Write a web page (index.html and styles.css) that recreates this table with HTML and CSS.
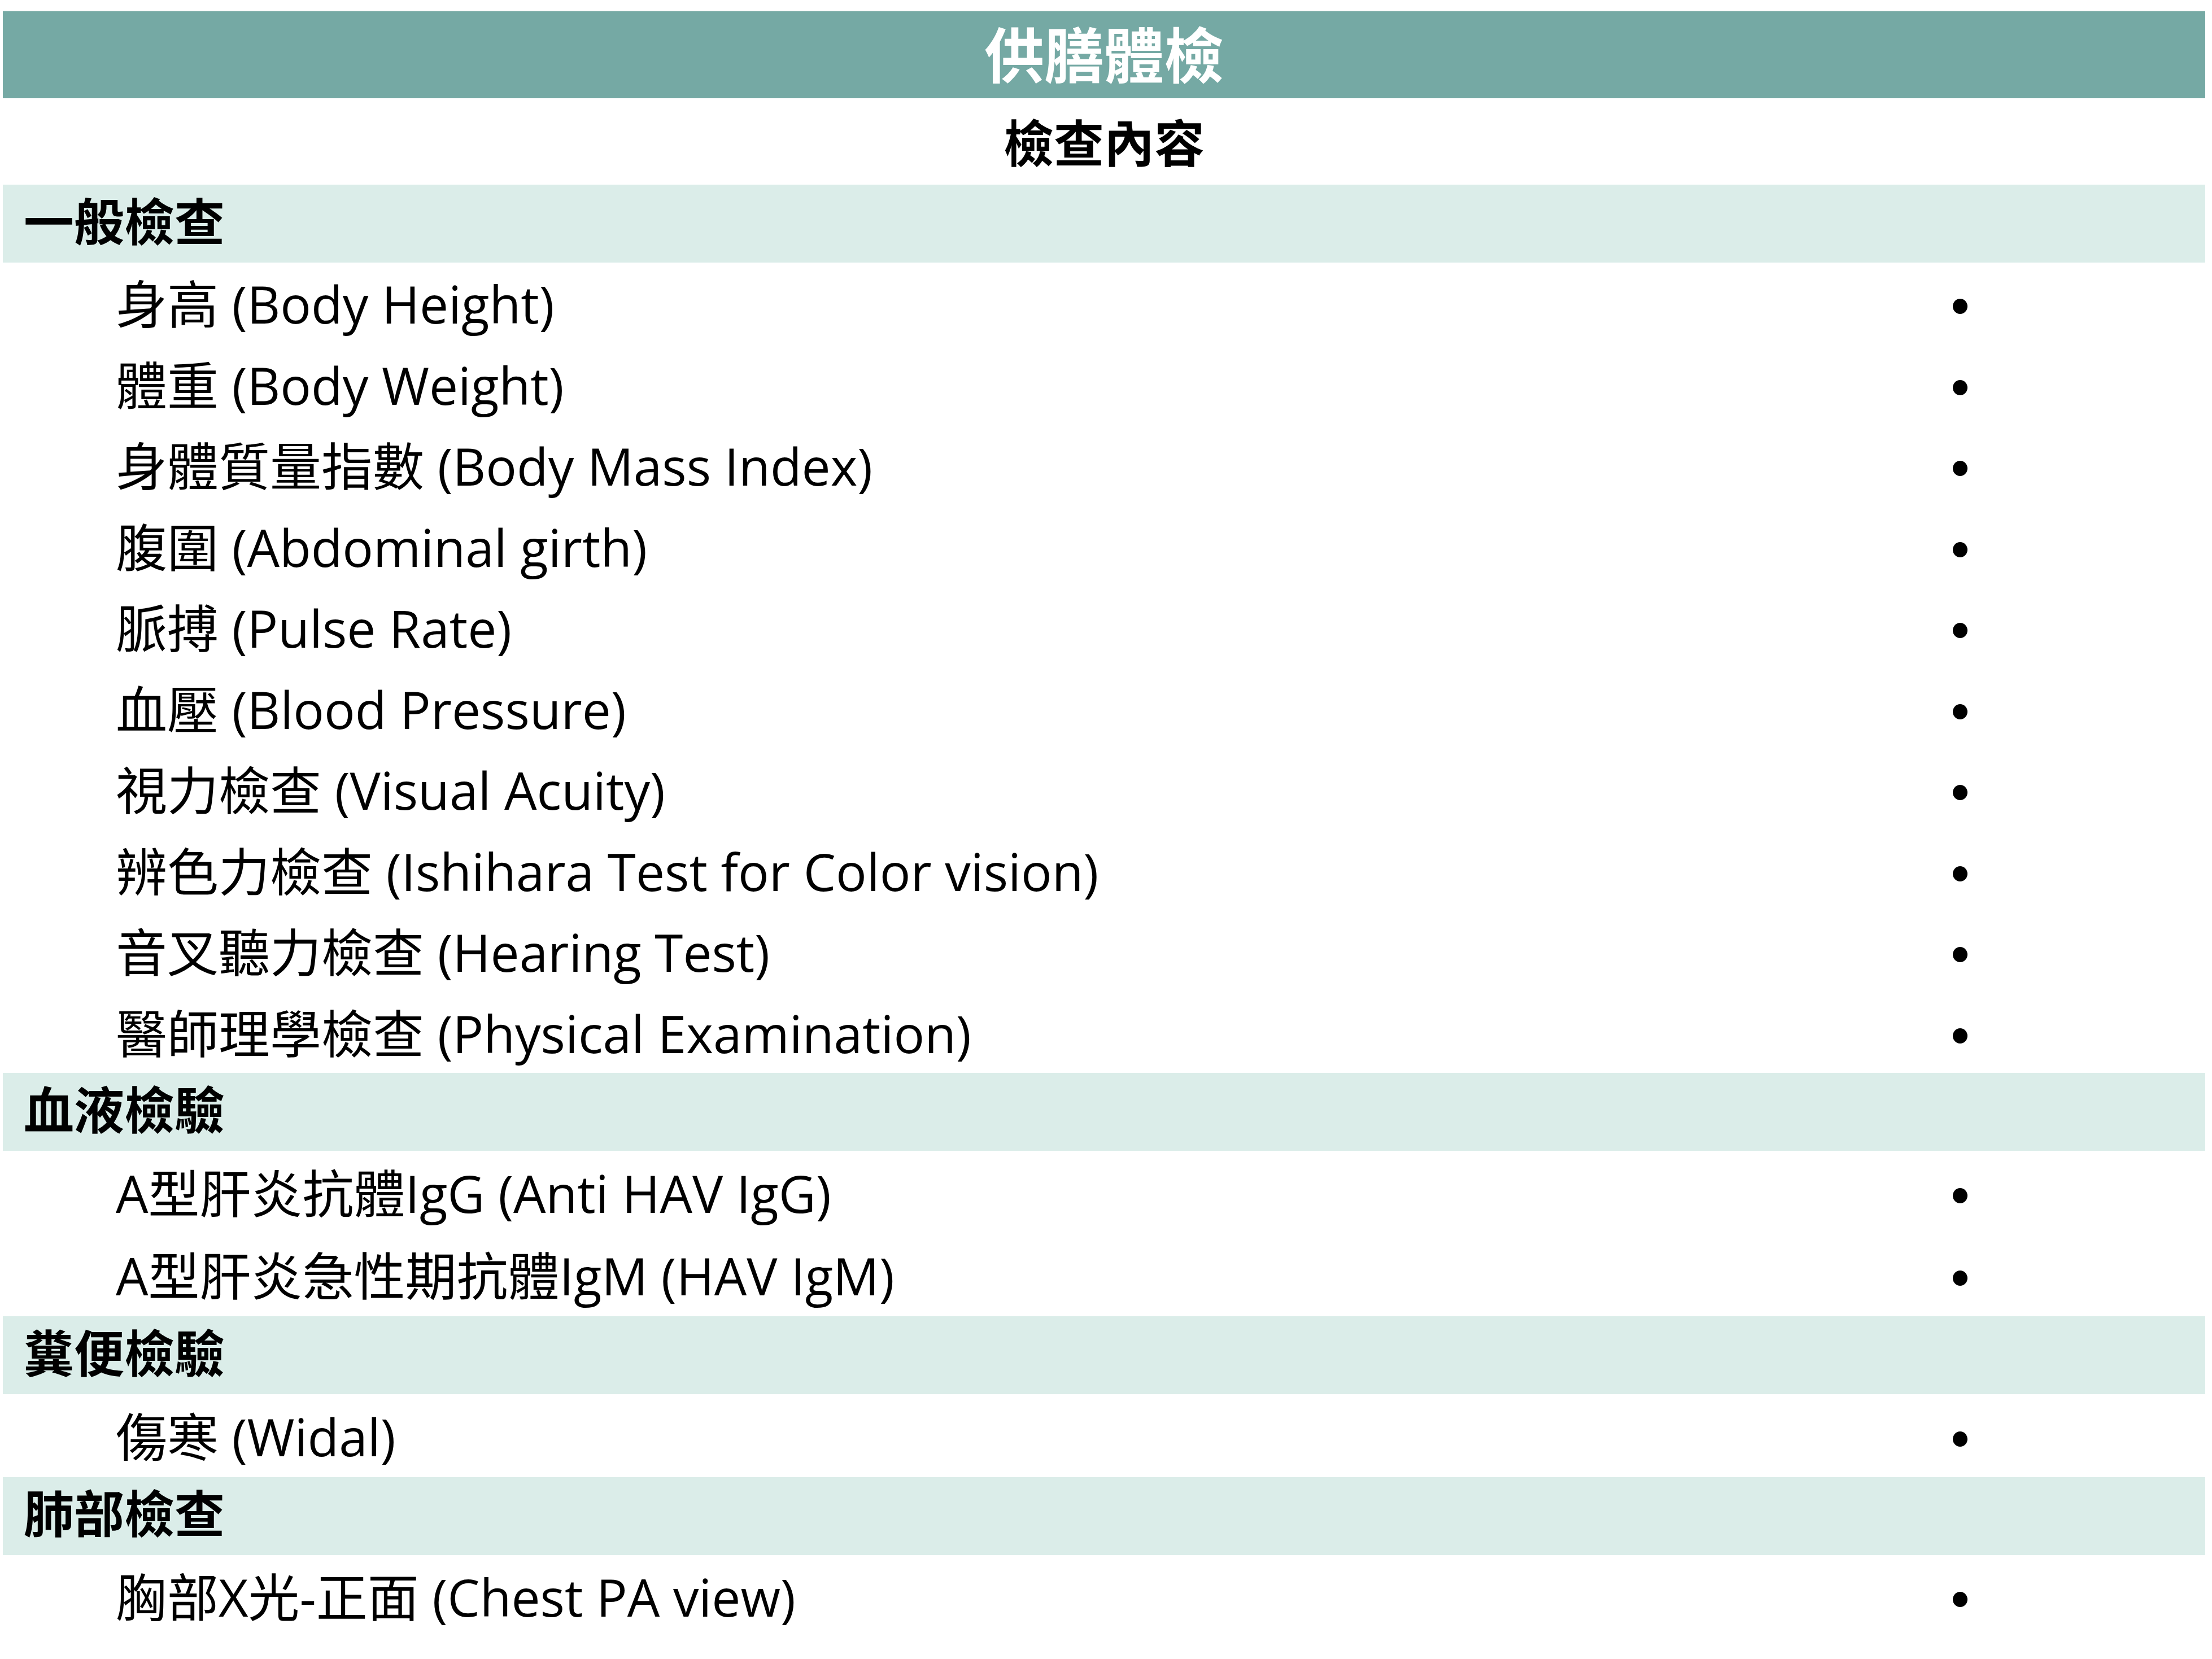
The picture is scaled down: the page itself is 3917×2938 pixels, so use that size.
FILE: index.html
```html
<!DOCTYPE html>
<html lang="zh-Hant">
<head>
    <meta charset="UTF-8">
    <title>供膳體檢</title>
    <link rel="stylesheet" href="styles.css">
</head>
<body>
    <div class="exam-table">
        <div class="title-row">供膳體檢</div>
        <div class="head-row">檢查內容</div>

        <div class="group-row">一般檢查</div>
        <div class="item-row"><span class="item-name">身高 (Body Height)</span><span class="item-mark"><span class="dot"></span></span></div>
        <div class="item-row"><span class="item-name">體重 (Body Weight)</span><span class="item-mark"><span class="dot"></span></span></div>
        <div class="item-row"><span class="item-name">身體質量指數 (Body Mass Index)</span><span class="item-mark"><span class="dot"></span></span></div>
        <div class="item-row"><span class="item-name">腹圍 (Abdominal girth)</span><span class="item-mark"><span class="dot"></span></span></div>
        <div class="item-row"><span class="item-name">脈搏 (Pulse Rate)</span><span class="item-mark"><span class="dot"></span></span></div>
        <div class="item-row"><span class="item-name">血壓 (Blood Pressure)</span><span class="item-mark"><span class="dot"></span></span></div>
        <div class="item-row"><span class="item-name">視力檢查 (Visual Acuity)</span><span class="item-mark"><span class="dot"></span></span></div>
        <div class="item-row"><span class="item-name">辨色力檢查 (Ishihara Test for Color vision)</span><span class="item-mark"><span class="dot"></span></span></div>
        <div class="item-row"><span class="item-name">音叉聽力檢查 (Hearing Test)</span><span class="item-mark"><span class="dot"></span></span></div>
        <div class="item-row"><span class="item-name">醫師理學檢查 (Physical Examination)</span><span class="item-mark"><span class="dot"></span></span></div>

        <div class="group-row">血液檢驗</div>
        <div class="item-row loose"><span class="item-name">A型肝炎抗體IgG (Anti HAV IgG)</span><span class="item-mark"><span class="dot"></span></span></div>
        <div class="item-row loose"><span class="item-name">A型肝炎急性期抗體IgM (HAV IgM)</span><span class="item-mark"><span class="dot"></span></span></div>

        <div class="group-row">糞便檢驗</div>
        <div class="item-row loose"><span class="item-name">傷寒 (Widal)</span><span class="item-mark"><span class="dot"></span></span></div>

        <div class="group-row">肺部檢查</div>
        <div class="item-row loose"><span class="item-name">胸部X光-正面 (Chest PA view)</span><span class="item-mark"><span class="dot"></span></span></div>
    </div>
</body>
</html>
```

FILE: styles.css
```css
body {
    margin: 0;
    background-color: #ffffff;
    color: #000000;
    font-family: "Open Sans", "Noto Sans CJK TC", sans-serif;
}
.exam-table {
    width: 3900px;
    margin: 19px 0 0 5px;
    display: flex;
    flex-direction: column;
}
.title-row {
    height: 155px;
    display: flex;
    align-items: center;
    justify-content: center;
    padding-bottom: 10px;
    box-sizing: border-box;
    background-color: #75a9a4;
    border-top: 1px solid #d6dedd;
    color: #ffffff;
    font-family: "Noto Sans CJK TC", sans-serif;
    font-weight: bold;
    font-size: 106px;
}
.head-row {
    height: 153px;
    display: flex;
    align-items: center;
    justify-content: center;
    padding-bottom: 4px;
    box-sizing: border-box;
    font-family: "Noto Sans CJK TC", sans-serif;
    font-weight: bold;
    font-size: 89px;
}
.group-row {
    height: 138px;
    display: flex;
    align-items: center;
    padding: 0 0 18px 37px;
    box-sizing: border-box;
    background-color: #dbede9;
    font-family: "Noto Sans CJK TC", sans-serif;
    font-weight: bold;
    font-size: 89px;
}
.item-row {
    height: 143.5px;
    display: grid;
    grid-template-columns: 1fr 868px;
    align-items: center;
    font-size: 91px;
}
.item-row.loose {
    height: 146.5px;
}
.item-name {
    padding: 0 0 6px 200px;
    white-space: nowrap;
}
.item-mark {
    display: flex;
    justify-content: center;
    padding-top: 12px;
}
.dot {
    width: 26px;
    height: 27px;
    border-radius: 50%;
    background-color: #000000;
}
```
